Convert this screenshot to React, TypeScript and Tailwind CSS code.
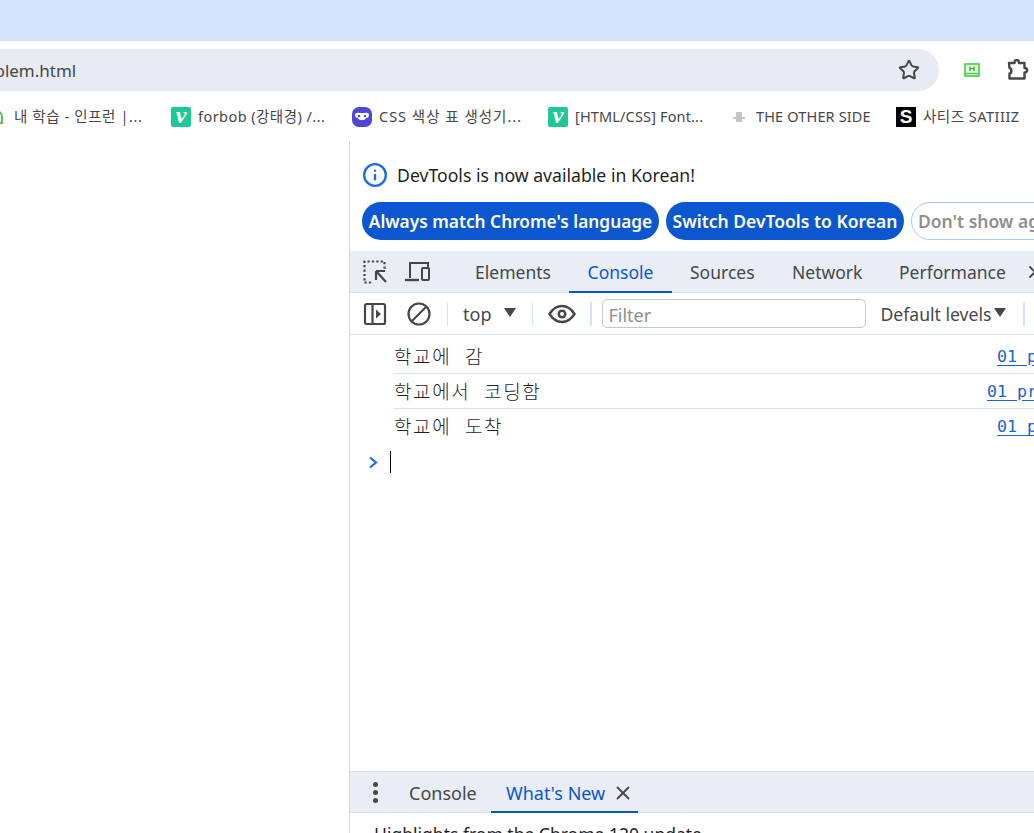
import React from "react";
import {Star, Info, X} from "lucide-react";

const uiFont = "font-['Noto_Sans','Noto_Sans_CJK_KR',sans-serif]";

const VLogo = () => (
  <div className="w-5 h-5 rounded-[2px] bg-[#1fc997] flex items-center justify-center text-white font-['Liberation_Serif',serif] italic font-bold text-[24px] leading-none pb-[4px]">
    v
  </div>
);

const Bookmark = ({icon, label, className, textClass}: {icon: React.ReactNode; label: string; className: string; textClass: string}) => (
  <div className={"flex items-center gap-[7px] shrink-0 " + className}>
    {icon}
    <span className={"text-[14.5px] text-[#474747] whitespace-nowrap " + textClass}>{label}</span>
  </div>
);

const InspectIcon = () => (
  <svg width="24" height="24" viewBox="0 0 24 24" fill="none" stroke="#474747">
    <path d="M1.5 20.5v-19h20v8" strokeWidth="2.2" strokeDasharray="2.2 2.2" />
    <path d="M1.5 22.5h8" strokeWidth="2.2" strokeDasharray="2.2 2.2" />
    <path d="M13 11h9M13 11v9M13 11l10 11" strokeWidth="2.2" />
  </svg>
);

const DeviceIcon = () => (
  <svg width="26" height="22" viewBox="0 0 26 22" fill="none" stroke="#474747" strokeWidth="2">
    <path d="M5 17V2h18v4" />
    <path d="M0 19h14" strokeWidth="2.4" />
    <rect x="17" y="7" width="7" height="12" rx="1" />
  </svg>
);

const SidebarIcon = () => (
  <svg width="24" height="24" viewBox="0 0 24 24" fill="none" stroke="#474747" strokeWidth="2.2">
    <rect x="2" y="2" width="20" height="20" rx="1.5" />
    <path d="M9.5 2v20" />
    <path d="M13 7.5l5 4.5-5 4.5z" fill="#474747" stroke="none" />
  </svg>
);

const BlockIcon = () => (
  <svg width="24" height="24" viewBox="0 0 24 24" fill="none" stroke="#474747" strokeWidth="2.2">
    <circle cx="12" cy="12" r="10.5" />
    <path d="M5 19L19 5" />
  </svg>
);

const EyeIcon = () => (
  <svg width="28" height="20" viewBox="0 0 28 20" fill="none" stroke="#474747" strokeWidth="2.4">
    <path d="M1.500 10C5 4.500 9 2 14 2s9 2.500 12.500 8C23 15.500 19 18 14 18S5 15.500 1.500 10z" />
    <circle cx="14" cy="10" r="4.500" fill="#474747" stroke="none" />
    <circle cx="14" cy="10" r="2" fill="#fff" stroke="none" />
  </svg>
);

const PuzzleIcon = () => (
  <svg width="22" height="22" viewBox="0 0 22 22" fill="none" stroke="#474747" strokeWidth="2.400" strokeLinejoin="round">
    <path d="M2 4h5.500c0-4 4.500-4 4.500 0H17.500v5c3.500 0 3.500 4.500 0 4.500V19.500H2.500v-5c2.500 0 2.500-5 0-5.500z" />
  </svg>
);

const ScreenIcon = () => (
  <svg width="16" height="14" viewBox="0 0 16 14" fill="none">
    <rect x="1" y="1" width="14" height="12" fill="#eafbe8" stroke="#3fd13a" strokeWidth="1.600" />
    <path d="M1 10.500h14" stroke="#3fd13a" strokeWidth="1.400" />
    <path d="M6 3.500v4.500M10 3.500v4.500M6 5.700h4" stroke="#25b820" strokeWidth="1.300" />
  </svg>
);

const Triangle = () => (
  <div className="w-0 h-0 border-x-[6.5px] border-x-transparent border-t-[9px] border-t-[#474747]" />
);

const Message = ({text, link, bordered}: {text: string; link: string; bordered?: boolean}) => (
  <div className={"ml-[44px] h-[35px] flex items-center justify-between " + (bordered ? "border-b border-[#d3e3fd]" : "")}>
    <span className="font-['Noto_Sans_CJK_KR',sans-serif] font-light text-[19px] tracking-[1.6px] [word-spacing:8px] text-[#1f1f1f] whitespace-nowrap">
      {text}
    </span>
    <a className="font-['DejaVu_Sans_Mono',monospace] text-[16.6px] text-[#1a62d6] underline underline-offset-[3px] whitespace-nowrap -mr-[3px] pt-[2px]">{link}</a>
  </div>
);

export default function App() {
  return (
    <div className={"w-[1034px] h-[833px] overflow-hidden bg-white flex flex-col " + uiFont}>
      <div className="h-[41px] shrink-0 bg-[#d3e3fd]" />

      {/* address bar */}
      <div className="h-[58px] shrink-0 pt-2 flex items-start">
        <div className="w-[939px] h-[42px] bg-[#e8ebf4] rounded-r-[21px] flex items-center justify-between pr-[19px] overflow-hidden">
          <span className="text-[17px] text-[#474747] -ml-[33px] pt-[2px] whitespace-nowrap">problem.html</span>
          <Star size={22} strokeWidth={2.2} color="#474747" />
        </div>
        <div className="flex items-center h-[42px] ml-[25px] gap-[27px]">
          <ScreenIcon />
          <PuzzleIcon />
        </div>
      </div>

      {/* bookmarks */}
      <div className="h-[42px] shrink-0 flex items-start pt-[7px] -ml-[6px]">
        <Bookmark
          className="w-[177px]"
          textClass="tracking-[0.6px]"
          label="내 학습 - 인프런 |..."
          icon={<div className="w-[13px] h-[14px] -ml-[4px] mr-[4px] rounded-t-full border-2 border-[#5cc25c]" />}
        />
        <Bookmark className="w-[181px]" textClass="tracking-[0.45px]" label="forbob (강태경) /..." icon={<VLogo />} />
        <Bookmark
          className="w-[196px]"
          textClass="tracking-[1px]"
          label="CSS 색상 표 생성기..."
          icon={
            <svg width="20" height="20" viewBox="0 0 20 20">
              <rect width="20" height="20" rx="7" fill="#4f46d8" />
              <path d="M3 7c2-2 4-1 7-1s5-1 7 1c0 3-1 4-3 4-1 3-7 3-8 0-2 0-3-1-3-4z" fill="#fff" />
              <circle cx="7" cy="9" r="1.200" fill="#4f46d8" />
              <circle cx="13" cy="9" r="1.200" fill="#4f46d8" />
            </svg>
          }
        />
        <Bookmark className="w-[181px]" textClass="tracking-[0.15px]" label="[HTML/CSS] Font..." icon={<VLogo />} />
        <Bookmark
          className="w-[167px]"
          textClass="tracking-[0.15px]"
          label="THE OTHER SIDE"
          icon={
            <svg width="20" height="20" viewBox="0 0 20 20" fill="#c4c4c4">
              <rect x="7" y="5" width="6" height="5" />
              <rect x="4" y="10" width="12" height="2" />
              <rect x="7" y="12" width="6" height="3" />
            </svg>
          }
        />
        <Bookmark
          className="w-[140px]"
          textClass="tracking-[0.5px]"
          label="사티즈 SATIIIZ"
          icon={
            <div className="w-5 h-5 bg-black text-white flex items-center justify-center font-['Liberation_Sans',sans-serif] font-bold text-[19px] leading-none">
              S
            </div>
          }
        />
      </div>

      {/* page + devtools */}
      <div className="flex-1 min-h-0 flex">
        <div className="w-[349px] shrink-0 bg-white" />
        <div className="flex-1 min-w-0 border-l border-[#d6d9df] flex flex-col overflow-hidden">
          {/* language infobar */}
          <div className="h-[110px] shrink-0 px-3 pt-[21px]">
            <div className="flex items-center gap-[9px] h-[26px]">
              <Info size={26} strokeWidth={2.2} color="#1a6fe8" />
              <span className="text-[17.65px] text-[#1f1f1f] whitespace-nowrap">DevTools is now available in Korean!</span>
            </div>
            <div className="flex gap-[7px] mt-[14px]">
              <div className="h-[38px] w-[297px] shrink-0 rounded-full bg-[#0b57d0] text-white font-semibold text-[17.3px] flex items-center justify-center pt-[1px] whitespace-nowrap">
                Always match Chrome's language
              </div>
              <div className="h-[38px] w-[238px] shrink-0 rounded-full bg-[#0b57d0] text-white font-semibold text-[17.5px] flex items-center justify-center whitespace-nowrap">
                Switch DevTools to Korean
              </div>
              <div className="h-[38px] shrink-0 rounded-full border border-[#a8c7fa] text-[#8f8f8f] font-semibold text-[17.5px] flex items-center pl-[6px] pr-4 whitespace-nowrap">
                Don't show again
              </div>
            </div>
          </div>

          {/* main tabs */}
          <div className="h-[42px] shrink-0 bg-[#e9edf6] border-b border-[#d3e3fd] flex items-center">
            <div className="flex items-center pl-[13px] gap-[18px] w-[98px] shrink-0">
              <InspectIcon />
              <DeviceIcon />
            </div>
            <div className="w-px h-6 bg-[#d3dbe8] mr-[12px] -ml-px" />
            <div className="flex h-full text-[17.5px] text-[#474747] whitespace-nowrap">
              <div className="w-[110px] flex items-center justify-center pr-[2px] pt-[2px]">Elements</div>
              <div className="w-[103px] flex items-center justify-center text-[#0b57d0] border-b-2 border-[#0b57d0] -mb-px pt-[2px]">Console</div>
              <div className="w-[102px] flex items-center pl-[18px] pt-[2px]">Sources</div>
              <div className="w-[107px] flex items-center pl-[18px] pt-[2px]">Network</div>
              <div className="w-[128px] flex items-center pl-[18px] pt-[2px]">Performance</div>
              <div className="flex items-center pl-[16px]">
                <X size={20} strokeWidth={2.2} color="#474747" />
              </div>
            </div>
          </div>

          {/* console toolbar */}
          <div className="h-[42px] shrink-0 border-b border-[#d3e3fd] flex items-center text-[18px] text-[#474747]">
            <div className="ml-[13px]">
              <SidebarIcon />
            </div>
            <div className="ml-[20px]">
              <BlockIcon />
            </div>
            <div className="w-px h-6 bg-[#d3e3fd] ml-[16px]" />
            <span className="ml-[15px] pt-[2px]">top</span>
            <div className="ml-[13px] -mt-[3px]">
              <Triangle />
            </div>
            <div className="w-px h-6 bg-[#d3e3fd] ml-[16px]" />
            <div className="ml-[15px]">
              <EyeIcon />
            </div>
            <div className="w-[2px] h-6 bg-[#d3e3fd] ml-[14px]" />
            <div className="ml-[10px] w-[264px] h-[29px] shrink-0 rounded-[5px] border border-[#c4c7c5] flex items-center pl-[5px] pt-[3px] text-[#8f8f8f]">
              Filter
            </div>
            <span className="ml-[14px] pt-[2px] text-[17.6px] whitespace-nowrap">Default levels</span>
            <div className="ml-[3px] -mt-[3px]">
              <Triangle />
            </div>
            <div className="w-[2px] h-6 bg-[#d3e3fd] ml-[17px]" />
          </div>

          {/* console messages */}
          <div className="flex-1 min-h-0 pt-[4px]">
            <Message text="학교에 감" link="01_p" bordered />
            <Message text="학교에서 코딩함" link="01_pr" bordered />
            <Message text="학교에 도착" link="01_p" />
            <div className="flex items-center h-[36px] pl-[18px]">
              <svg width="11" height="13" viewBox="0 0 11 13" fill="none" stroke="#1a6fe8" strokeWidth="2.200">
                <path d="M2 1.500L8 6.500L2 11.500" />
              </svg>
              <div className="w-px h-[22px] bg-black ml-[11px]" />
            </div>
          </div>

          {/* drawer */}
          <div className="h-[42px] shrink-0 bg-[#e9edf6] border-y border-[#d3e3fd] flex items-center text-[18px]">
            <div className="w-[50px] flex flex-col items-center gap-[3px] shrink-0">
              <span className="block w-[5px] h-[5px] rounded-full bg-[#474747]" />
              <span className="block w-[5px] h-[5px] rounded-full bg-[#474747]" />
              <span className="block w-[5px] h-[5px] rounded-full bg-[#474747]" />
            </div>
            <span className="text-[#474747] ml-[9px] w-[82px] shrink-0 pt-[2px]">Console</span>
            <div className="h-full w-[147px] flex items-center justify-between pl-[15px] pr-[4px] text-[#0b57d0] border-b-2 border-[#0b57d0] -mb-px whitespace-nowrap pt-[3px]">
              What's New
              <X size={22} strokeWidth={2} color="#474747" />
            </div>
          </div>
          <div className="h-[20px] shrink-0 pl-6 pt-[8px] text-[17.5px] text-[#1f1f1f] whitespace-nowrap">
            Highlights from the Chrome 120 update
          </div>
        </div>
      </div>
    </div>
  );
}
